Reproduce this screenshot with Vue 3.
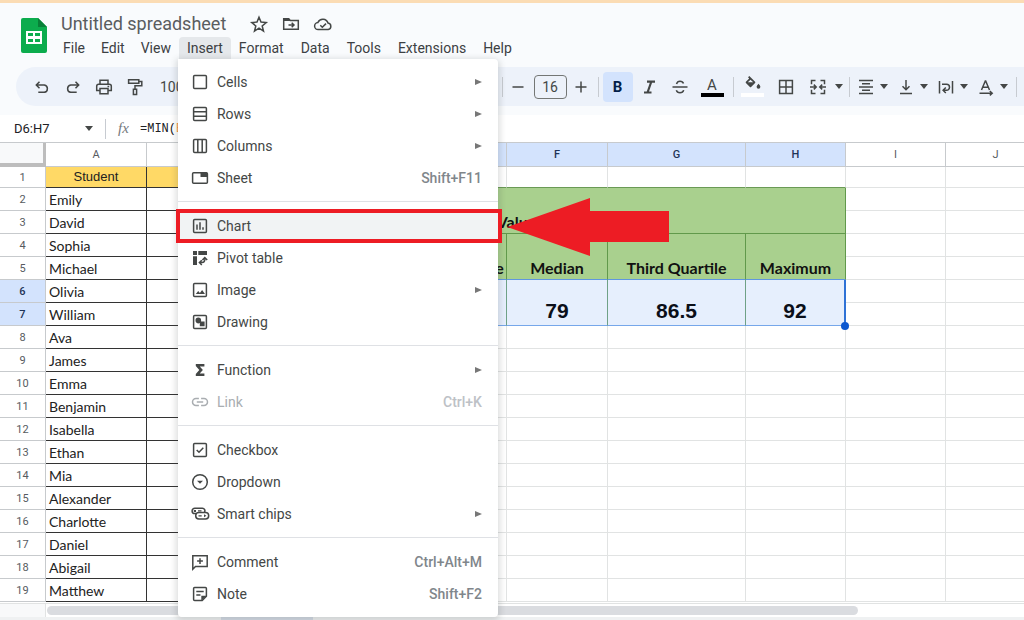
<script setup>
const menusBefore = ['File', 'Edit', 'View']
const menusAfter = ['Format', 'Data', 'Tools', 'Extensions', 'Help']

const groups = [
  [
    { label: 'Cells', icon: 'cells', sub: true },
    { label: 'Rows', icon: 'rows', sub: true },
    { label: 'Columns', icon: 'columns', sub: true },
    { label: 'Sheet', icon: 'sheet', keys: 'Shift+F11' },
  ],
  [
    { label: 'Chart', icon: 'chart', active: true },
    { label: 'Pivot table', icon: 'pivot' },
    { label: 'Image', icon: 'image', sub: true },
    { label: 'Drawing', icon: 'drawing' },
  ],
  [
    { label: 'Function', icon: 'function', sub: true },
    { label: 'Link', icon: 'link', keys: 'Ctrl+K', disabled: true },
  ],
  [
    { label: 'Checkbox', icon: 'checkbox' },
    { label: 'Dropdown', icon: 'dropdown' },
    { label: 'Smart chips', icon: 'chips', sub: true },
  ],
  [
    { label: 'Comment', icon: 'comment', keys: 'Ctrl+Alt+M' },
    { label: 'Note', icon: 'note', keys: 'Shift+F2' },
  ],
]

/* Stroked outlines (s) and filled parts (f) on an 18-unit grid */
const icons = {
  cells: { s: 'M3.6 2.5h10.8q1 0 1 1v11q0 1-1 1H3.6q-1 0-1-1v-11q0-1 1-1z' },
  rows: { s: 'M3.6 2.5h10.8q1 0 1 1v11q0 1-1 1H3.6q-1 0-1-1v-11q0-1 1-1zM3 6.8h12M3 11.2h12' },
  columns: { s: 'M3.6 2.5h10.8q1 0 1 1v11q0 1-1 1H3.6q-1 0-1-1v-11q0-1 1-1zM6.8 3v12M11.2 3v12' },
  sheet: { s: 'M2.6 3.7h12.8q1 0 1 1v8.6q0 1-1 1H2.6q-1 0-1-1V4.7q0-1 1-1z', f: 'M9.5 3.5h6.5v4.5H9.5z' },
  chart: { s: 'M3.6 2.5h10.8q1 0 1 1v11q0 1-1 1H3.6q-1 0-1-1v-11q0-1 1-1zM6 7.5v5.3M9 5.3v7.5M12 10.3v2.5' },
  pivot: { s: 'M8.5 13.6h2.5q2.8 0 2.8-3.3M10.8 11.2l-2.4 2.4 2.4 2.4M11.4 11l2.4-2.4L16.2 11', f: 'M2 2h4v4H2zM7.3 2H16v4H7.3zM2 7.3h4V16H2z' },
  image: { s: 'M3.6 2.5h10.8q1 0 1 1v11q0 1-1 1H3.6q-1 0-1-1v-11q0-1 1-1z', f: 'M4.8 12.9l2.4-3 1.7 2 2.2-2.9 2.9 3.9z' },
  drawing: { s: 'M3.6 2.5h10.8q1 0 1 1v11q0 1-1 1H3.6q-1 0-1-1v-11q0-1 1-1z', f: 'M4.5 7.3a2.8 2.8 0 1 1 5.6 0v1.2h3.5v4.8H8.8V10a2.8 2.8 0 0 1-4.3-2.7z' },
  function: { f: 'M4.8 3h8.6v2.5H8.8L11.9 9l-3.2 3.5h4.7V15H4.8v-2L8.3 9 4.8 5z' },
  link: { s: 'M7.9 5.5H5a3.5 3.5 0 0 0 0 7h2.9M10.1 5.5H13a3.5 3.5 0 0 1 0 7h-2.9M5.8 9h6.4' },
  checkbox: { s: 'M3.6 2.5h10.8q1 0 1 1v11q0 1-1 1H3.6q-1 0-1-1v-11q0-1 1-1zM5.7 9l2.3 2.3 4.3-4.5' },
  dropdown: { s: 'M9 1.7a7.3 7.3 0 1 0 0 14.6A7.3 7.3 0 0 0 9 1.7z', f: 'M6 7.7h6l-3 3z' },
  chips: { s: 'M13.3 7.3a2.5 2.5 0 0 0-2-4.1H3.8a2.6 2.6 0 0 0 0 5.4h1.6M7.9 7.6h6.6a3.2 3.2 0 0 1 0 6.400H7.900a3.200 3.200 0 0 1 0-6.400z', f: 'M2.800 4.900h2.200v2H2.800zM7 5.300h3.500v1.300H7zM7.500 10.200h3.200v1.300H7.500zM13 9.300l2.400 1.500-2.400 1.500z' },
  comment: { s: 'M1.8 16.2V2.7h14.4v10.8H4.5zM9 5.2v5.8M6.1 8.1h5.8' },
  note: { s: 'M3.6 2.5h10.8q1 0 1 1v7.8l-4.2 4.2H3.6q-1 0-1-1v-11q0-1 1-1zM5.3 6.6h7.4M5.3 9.9h4.2', f: 'M10.3 15.8v-5h5.5z' },
  undo: { s: 'M6.5 3.7L3.3 7l3.2 3.2M3.5 7h7.8a3.7 3.7 0 0 1 0 7.3H5.3' },
  redo: { s: 'M11.5 3.7L14.7 7l-3.2 3.2M14.5 7H6.7a3.7 3.7 0 0 0 0 7.3h6' },
  print: { s: 'M5 6V2.3h8V6M5 12.5H1.7V8.2Q1.7 6.2 3.7 6.2h10.6q2 0 2 2v4.3H13M5 10.5h8v5.2H5z', f: 'M12.5 7.7h1.7v1.6h-1.7z' },
  paint: { s: 'M2.6 1.7h10.2v3.6H2.6zM12.8 3.500h3v4.300H9v3.400M7.400 11.200h3.200v5.300H7.400z' },
  minus: { s: 'M3.5 9h11' },
  plus: { s: 'M3.5 9h11M9 3.5v11' },
  italic: { s: 'M7 3.7h8M4 14.5h7.5M11.2 4L7.7 14' },
  strike: { s: 'M1.5 9h15M12.5 5.5q-.8-2.3-3.5-2.3T5.500 6M5.300 12.300q.8 2.500 3.700 2.500t3.700-2.700' },
  borders: { s: 'M2.6 2.6h12.8v12.8H2.6zM9 2.6v12.8M2.6 9h12.8' },
  merge: { s: 'M6.5 2.5H2.5v3.7M11.5 2.5h4v3.7M6.5 15.5H2.5v-3.7M11.5 15.5h4v-3.7M1 9h5.5M17 9h-5.5M4.8 6.6L7.2 9l-2.4 2.4M13.2 6.6L10.8 9l2.4 2.4' },
  align: { s: 'M2 2.5h14M5 5.8h8M2 9h14M5 12.2h8M2 15.5h14' },
  valign: { s: 'M9 2v9.5M5.5 8.3L9 11.8l3.5-3.5M3 15.5h12' },
  wrap: { s: 'M2.5 3v12.5M15.5 3v12.5M5 6.3h4.5a3 3 0 0 1 0 6H6.5M8.8 9.5l-2.7 2.8L8.8 15' },
  rotate: { s: 'M4.5 12L8.3 3h.4l3.8 9M6 9.2h5M2.5 15.2h12.5M12.8 13l2.4 2.2-2.4 2.2' },
  star: { s: 'M9 2.2l2 4.9 5.2.4-4 3.4 1.3 5.2L9 13.2l-4.5 2.9 1.3-5.2-4-3.4 5.2-.4z' },
  folder: { s: 'M1.7 3.8h5l1.6 1.7h8v8.7H1.7zM6.5 10h5.3M9.7 7.7L12 10l-2.3 2.3', f: 'M1.5 3.5H7L8.6 6H1.5z' },
  cloud: { s: 'M4.3 14.5a3.5 3.5 0 0 1-.4-7A5.4 5.4 0 0 1 14 8a3.3 3.3 0 0 1 .2 6.5zM6.3 10.3l2 2 3.7-3.7' },
  fill: { f: 'M5.3 1l5.8 5.8q.5.6 0 1.2l-4 4q-.6.5-1.2 0l-4-4q-.5-.6 0-1.2l3.3-3.3L4 2.2zM6.5 4.8L3.8 7.3h5.4zM14.5 8.8q1.9 2 1.9 3a1.9 1.9 0 0 1-3.8 0q0-1 1.9-3z' },
}

const columns = ['A', 'B', 'C', 'D', 'E', 'F', 'G', 'H', 'I', 'J']
const selectedColumns = ['D', 'E', 'F', 'G', 'H']
const names = ['Student', 'Emily', 'David', 'Sophia', 'Michael', 'Olivia', 'William', 'Ava', 'James', 'Emma', 'Benjamin', 'Isabella', 'Ethan', 'Mia', 'Alexander', 'Charlotte', 'Daniel', 'Abigail', 'Matthew']
const stats = [
  { name: 'Minimum', value: '' },
  { name: 'First Quartile', value: '' },
  { name: 'Median', value: '79' },
  { name: 'Third Quartile', value: '86.5' },
  { name: 'Maximum', value: '92' },
]
</script>

<template>
  <div class="app">
    <header class="header">
      <svg class="logo" viewBox="0 0 26 35" aria-hidden="true">
        <path fill="#0cac4d" d="M2 0h15l9 9v24q0 2-2 2H2q-2 0-2-2V2q0-2 2-2z" />
        <path fill="#088038" d="M17 0l9 9h-9z" />
        <path fill="#fff" d="M5 13h16v13H5z" />
        <path fill="#0cac4d" d="M7 15h5v3H7zM14 15h5v3h-5zM7 21h5v3H7zM14 21h5v3h-5z" />
      </svg>
      <div class="heading">
        <div class="title-row">
          <h1>Untitled spreadsheet</h1>
          <button v-for="n in ['star', 'folder', 'cloud']" :key="n" class="title-icon" :aria-label="n">
            <svg class="icon" viewBox="0 0 18 18"><path class="stroke" :d="icons[n].s" /><path v-if="icons[n].f" class="solid" :d="icons[n].f" /></svg>
          </button>
        </div>
        <nav class="menubar">
          <button v-for="m in menusBefore" :key="m" class="menu-name">{{ m }}</button>
          <div class="anchor">
            <button class="menu-name open" aria-haspopup="true" aria-expanded="true">Insert</button>
            <div class="menu" role="menu">
              <div v-for="(group, g) in groups" :key="g" class="group">
                <button v-for="item in group" :key="item.label" class="item" :class="{ active: item.active }" role="menuitem" :disabled="item.disabled">
                  <svg class="icon" viewBox="0 0 18 18" aria-hidden="true">
                    <path v-if="icons[item.icon].s" class="stroke" :d="icons[item.icon].s" />
                    <path v-if="icons[item.icon].f" class="solid" :d="icons[item.icon].f" />
                  </svg>
                  <span class="label">{{ item.label }}</span>
                  <span v-if="item.keys" class="keys">{{ item.keys }}</span>
                  <svg v-if="item.sub" class="sub" viewBox="0 0 7 8" aria-hidden="true"><path d="M0 1L7 4 0 7z" /></svg>
                </button>
              </div>
              <svg class="arrow" viewBox="0 0 162 58" aria-hidden="true"><path d="M0 29L83 0v13h79v31H83v14z" /></svg>
            </div>
          </div>
          <button v-for="m in menusAfter" :key="m" class="menu-name after">{{ m }}</button>
        </nav>
      </div>
    </header>

    <div class="toolbar" role="toolbar">
      <button v-for="n in ['undo', 'redo', 'print', 'paint']" :key="n" class="tool" :aria-label="n">
        <svg class="icon" viewBox="0 0 18 18"><path class="stroke" :d="icons[n].s" /><path v-if="icons[n].f" class="solid" :d="icons[n].f" /></svg>
      </button>
      <button class="zoom">100%</button>
      <div class="format">
        <i class="rule"></i>
        <button class="tool" aria-label="Decrease font size"><svg class="icon" viewBox="0 0 18 18"><path class="stroke" :d="icons.minus.s" /></svg></button>
        <input class="size" value="16" aria-label="Font size" />
        <button class="tool" aria-label="Increase font size"><svg class="icon" viewBox="0 0 18 18"><path class="stroke" :d="icons.plus.s" /></svg></button>
        <i class="rule"></i>
        <button class="tool bold" aria-pressed="true" aria-label="Bold">B</button>
        <button class="tool" aria-label="Italic"><svg class="icon" viewBox="0 0 18 18"><path class="stroke heavy" :d="icons.italic.s" /></svg></button>
        <button class="tool" aria-label="Strikethrough"><svg class="icon" viewBox="0 0 18 18"><path class="stroke" :d="icons.strike.s" /></svg></button>
        <button class="tool swatch ink" aria-label="Text color">A</button>
        <i class="rule"></i>
        <button class="tool swatch paper" aria-label="Fill color"><svg class="icon" viewBox="0 0 18 18"><path class="solid" fill-rule="evenodd" :d="icons.fill.f" /></svg></button>
        <button class="tool" aria-label="Borders"><svg class="icon" viewBox="0 0 18 18"><path class="stroke" :d="icons.borders.s" /></svg></button>
        <button class="tool drop wide" aria-label="Merge cells"><svg class="icon" viewBox="0 0 18 18"><path class="stroke" :d="icons.merge.s" /></svg><i class="caret"></i></button>
        <i class="rule"></i>
        <button v-for="n in ['align', 'valign', 'wrap', 'rotate']" :key="n" class="tool drop" :aria-label="n">
          <svg class="icon" viewBox="0 0 18 18"><path class="stroke" :d="icons[n].s" /></svg><i class="caret"></i>
        </button>
        <i class="rule"></i>
      </div>
    </div>

    <div class="formula-bar">
      <input class="range" value="D6:H7" aria-label="Name box" />
      <button class="range-drop" aria-label="Named ranges"><i class="caret"></i></button>
      <i class="rule"></i>
      <span class="fx">fx</span>
      <div class="formula">=MIN(<span>B2:B19</span>)</div>
    </div>

    <main class="sheet">
      <table>
        <colgroup>
          <col class="c-num" /><col class="c-a" /><col class="c-std" /><col class="c-c" /><col class="c-std" /><col class="c-std" />
          <col class="c-a" /><col class="c-g" /><col class="c-std" /><col class="c-std" /><col />
        </colgroup>
        <thead>
          <tr>
            <th class="corner"></th>
            <th v-for="c in columns" :key="c" :class="{ picked: selectedColumns.includes(c) }">{{ c }}</th>
          </tr>
        </thead>
        <tbody>
          <tr v-for="(name, i) in names" :key="name" :class="{ first: i === 0 }">
            <th :class="{ picked: i === 5 || i === 6 }">{{ i + 1 }}</th>
            <td class="name" :class="{ gold: i === 0 }">{{ name }}</td>
            <td class="name" :class="{ gold: i === 0 }"></td>
            <td></td>
            <template v-if="i === 0"><td v-for="k in 5" :key="k" class="above"></td></template>
            <td v-else-if="i === 1" class="green caption" colspan="5" rowspan="2">Values</td>
            <template v-else-if="i === 3"><td v-for="s in stats" :key="s.name" class="green stat" rowspan="2">{{ s.name }}</td></template>
            <template v-else-if="i === 5"><td v-for="s in stats" :key="s.name" class="value" rowspan="2">{{ s.value }}</td></template>
            <template v-else-if="i > 6"><td v-for="k in 5" :key="k"></td></template>
            <td></td>
            <td></td>
          </tr>
        </tbody>
      </table>
    </main>
    <div class="scroll"><div class="gutter"></div><div class="track"><div class="thumb"></div></div></div>
    <footer class="tabs"><div class="tab"></div></footer>
  </div>
</template>

<style>
body { background: #f9fbfd; }
</style>

<style scoped>
.app {
  height: 100vh;
  box-sizing: border-box;
  display: flex;
  flex-direction: column;
  border-top: 3px solid #fbdcb4;
  background: #f9fbfd;
  color: #444746;
  font-family: Roboto, "Liberation Sans", sans-serif;
  font-size: 14px;
  overflow: hidden;
}
button, input { font: inherit; color: inherit; border: 0; padding: 0; background: none; }
button { white-space: nowrap; }
.icon { width: 18px; height: 18px; flex: none; display: block; overflow: visible; }
.stroke { fill: none; stroke: currentColor; stroke-width: 1.5; }
.heavy { stroke-width: 2.2; }
.solid { fill: currentColor; }

.header { display: flex; align-items: flex-start; height: 64px; flex: none; }
.logo { width: 26px; height: 35px; margin: 15px 8px 0 21px; }
.heading { padding-top: 8px; }
.title-row { display: flex; align-items: center; height: 26px; padding-left: 6px; }
h1 { margin: 0 24px 0 0; font: 400 18px/26px Roboto, sans-serif; color: #5a5d60; }
.title-icon { width: 18px; height: 18px; margin-right: 14px; }
.menubar { display: flex; height: 22px; }
.menu-name { height: 22px; padding: 0 8px; border-radius: 4px 4px 0 0; color: #3c4043; }
.after { margin-right: 1px; }
.open { background: #e5e8eb; }
.anchor { position: relative; }

.menu {
  position: absolute;
  z-index: 5;
  top: 100%;
  left: -1px;
  width: 320px;
  padding: 7px 0;
  box-sizing: border-box;
  background: #fff;
  border-radius: 0 4px 4px 4px;
  box-shadow: 0 2px 6px 2px rgba(60, 64, 67, .18);
}
.group + .group { margin-top: 7px; border-top: 1px solid #dfe1e5; padding-top: 8px; }
.item { position: relative; display: flex; align-items: center; width: 100%; height: 32px; padding: 0 16px 0 13px; text-align: left; }
.label { flex: 1; margin-left: 8px; }
.keys { color: #80868b; font-weight: 500; }
.sub { width: 7px; height: 8px; fill: #777; }
.item:disabled { color: #a9adb1; }
.item:disabled .keys { color: #bdc1c6; }
.active { background: #f1f3f4; }
.active::after { content: ""; position: absolute; inset: -1px -4px -1px -2px; border: 4px solid #ed1c24; }
.arrow { position: absolute; top: 139px; left: 329px; width: 162px; height: 58px; fill: #ed1c24; }

.toolbar { display: flex; align-items: center; flex: none; height: 39px; margin-left: 16px; padding-left: 10px; border-radius: 20px 0 0 20px; background: #edf2fa; overflow: hidden; }
.toolbar > .tool { width: 31px; }
.tool { display: flex; align-items: center; justify-content: center; height: 30px; flex: none; }
.zoom { flex: none; width: 350px; padding-left: 10px; text-align: left; }
.format {
  display: grid;
  flex: none;
  align-items: center;
  justify-items: center;
  grid-template-columns: 4px 28px 36px 26px 8px 31px 31px 32px 32px 10px 29px 38px 41px 6px 40px 40px 40px 41px 6px;
}
.rule { display: block; width: 1px; height: 20px; background: #c7cbd1; }
.size { width: 33px; height: 24px; box-sizing: border-box; border: 1px solid #747775; border-radius: 4px; text-align: center; }
.bold { width: 30px; border-radius: 4px; background: #d3e3fd; color: #041e49; font-weight: 700; font-size: 15px; }
.swatch { position: relative; width: 23px; font-size: 15px; padding-bottom: 4px; box-sizing: border-box; }
.swatch::after { content: ""; position: absolute; left: 0; right: 0; bottom: 5px; height: 4px; background: #000; }
.paper { padding-bottom: 6px; }
.paper::after { background: #fff; }
.drop { gap: 5px; }
.wide { gap: 8px; }
.caret { display: block; border: 4px solid transparent; border-top: 5px solid #444746; border-bottom: 0; }

.formula-bar { display: flex; align-items: center; flex: none; height: 27px; margin-top: 9px; background: #fff; border-bottom: 1px solid #c7cacd; }
.range { width: 71px; padding-left: 14px; font-size: 13px; color: #202124; }
.range-drop { width: 8px; height: 20px; display: flex; align-items: center; }
.formula-bar .rule { margin: 0 12px; }
.fx { width: 22px; font: italic 15px "Liberation Serif", serif; color: #75797d; }
.formula { font: 12px "Liberation Mono", monospace; color: #202124; }
.formula span { color: #f79642; }

.sheet { flex: 1; min-height: 0; overflow: hidden; background: #fff; }
table { table-layout: fixed; width: 1046px; min-width: 100%; border-collapse: separate; border-spacing: 0; }
.c-num { width: 46px; }
.c-a { width: 101px; }
.c-std { width: 100px; }
.c-c { width: 60px; }
.c-g { width: 138px; }
th, td { box-sizing: border-box; height: 23px; padding: 0; border: solid #e1e3e3; border-width: 0 1px 1px 0; white-space: nowrap; line-height: 16px; }
th { font-size: 11px; font-weight: 400; color: #575b5f; border-color: #c7cacd; }
tbody th { padding-top: 2px; }
thead th { height: 24px; }
.corner { background: #f8f9fa; border: solid #bdbdbd; border-width: 0 3px 4px 0; }
.picked { background: #d3e3fd; color: #1f3457; font-weight: 500; }
.first > * { height: 21px; }
.name { padding-left: 3px; border-color: #333; font: 14px/18px Lato, sans-serif; color: #222; vertical-align: bottom; padding-bottom: 1px; }
.gold { background: #ffd966; text-align: center; padding: 0; font: 13px/18px "Liberation Sans", sans-serif; vertical-align: middle; }
.above { border-bottom-color: #6a9a55; }
.green { background: #a9d08e; border-color: #61994b; }
.caption, .stat { font: 700 16px/18px Lato, sans-serif; color: #111; text-align: center; vertical-align: bottom; padding-bottom: 2px; }
.caption { padding: 0 112px 2px 0; }
.stat { border-bottom-color: #5f97e0; }
.value { position: relative; background: #e6effd; border-color: #6fa187; border-bottom-color: #76a7ea; color: #0b0f19; font: 700 21px/24px "Liberation Sans", sans-serif; text-align: center; vertical-align: bottom; padding-bottom: 2px; }
.value:nth-child(9) { border-right: 2px solid #2f72d6; }
.value:nth-child(9)::after { content: ""; position: absolute; right: -5px; bottom: -5px; width: 8px; height: 8px; border-radius: 50%; background: #0b57d0; }

.scroll { display: flex; flex: none; height: 13px; background: #fff; border-top: 1px solid #e1e3e3; }
.gutter { width: 45px; background: #f8f9fa; border-right: 1px solid #e1e3e3; }
.track { flex: 1; padding: 2px 0 0 1px; }
.thumb { width: 83%; height: 9px; border-radius: 5px; background: #dadce0; }
.tabs { flex: none; height: 3px; background: #eff1f2; padding-left: 221px; }
.tab { width: 92px; height: 3px; background: #d5dce6; }
</style>
